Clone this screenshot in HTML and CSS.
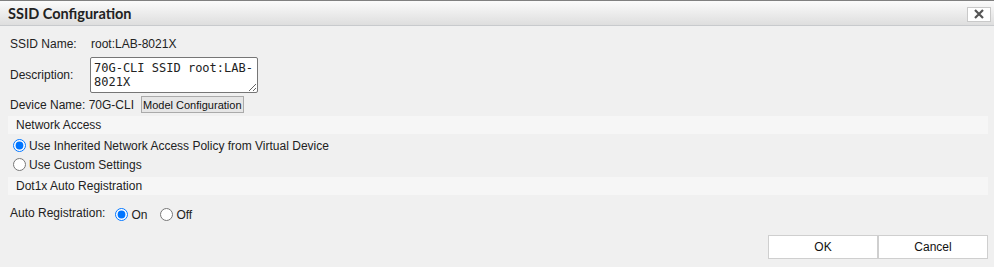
FILE: index.html
```html
<!DOCTYPE html>
<html>
<head>
<meta charset="utf-8">
<link rel="stylesheet" href="styles.css">
</head>
<body>
<div class="dialog">
  <div class="titlebar">
    <h1 class="title">SSID Configuration</h1>
    <button class="close" type="button" aria-label="Close">
      <svg width="12" height="10" viewBox="0 0 12 10"><path d="M2 1 L10 9 M10 1 L2 9" stroke="#555" stroke-width="2.2" fill="none"/></svg>
    </button>
  </div>
  <div class="content">
    <div class="row r-name">
      <span class="label">SSID Name:</span>
      <span class="value">root:LAB-8021X</span>
    </div>
    <div class="row r-desc">
      <span class="label">Description:</span>
      <textarea class="desc">70G-CLI SSID root:LAB-8021X</textarea>
    </div>
    <div class="row r-dev">
      <span class="plain">Device Name: 70G-CLI</span>
      <button class="model" type="button">Model Configuration</button>
    </div>
    <div class="band">Network Access</div>
    <label class="radio-row"><input type="radio" name="na" checked>Use Inherited Network Access Policy from Virtual Device</label>
    <label class="radio-row"><input type="radio" name="na">Use Custom Settings</label>
    <div class="band band2">Dot1x Auto Registration</div>
    <div class="row r-auto">
      <span class="plain">Auto Registration:</span>
      <label class="opt opt-on"><input type="radio" name="ar" checked>On</label>
      <label class="opt"><input type="radio" name="ar">Off</label>
    </div>
    <div class="footer">
      <button class="btn" type="button">OK</button>
      <button class="btn" type="button">Cancel</button>
    </div>
  </div>
</div>
</body>
</html>
```
FILE: styles.css
```css
html, body {
  margin: 0;
  padding: 0;
  background: #f0f0f0;
}
body {
  width: 994px;
  height: 267px;
  overflow: hidden;
  font-family: "Liberation Sans", Arial, sans-serif;
  font-size: 12px;
  color: #222;
}
.dialog {
  display: flex;
  flex-direction: column;
}
.titlebar {
  height: 24px;
  border-top: 1px solid #808080;
  border-bottom: 1px solid #c8cacd;
  background: linear-gradient(#fbfbfb, #dedede);
  display: flex;
  align-items: center;
  justify-content: space-between;
  padding: 0 3px 0 8px;
}
.title {
  margin: 0;
  font-family: Lato, "Open Sans", sans-serif;
  font-weight: 700;
  font-size: 14.5px;
  color: #222;
}
.close {
  width: 24px;
  height: 15px;
  margin-top: 2px;
  padding: 0;
  background: #fff;
  border: 1px solid #c9c9c9;
  display: flex;
  align-items: center;
  justify-content: center;
}
.content {
  padding: 8px 6px 0 8px;
  display: flex;
  flex-direction: column;
}
.row {
  display: flex;
  align-items: center;
}
.r-name {
  height: 20px;
}
.label {
  width: 80px;
  padding-left: 2px;
}
.value {
  padding-left: 1px;
}
.r-desc {
  margin-top: 3px;
  height: 36px;
}
.desc {
  box-sizing: border-box;
  width: 168px;
  height: 36px;
  margin: 0;
  padding: 3px 3px 1px;
  border: 1px solid #767676;
  border-radius: 2px;
  background: #fff;
  font-family: "DejaVu Sans Mono", "Liberation Mono", monospace;
  font-size: 12px;
  line-height: 14px;
  color: #222;
  resize: both;
  overflow: hidden;
}
.r-dev {
  margin-top: 2px;
  height: 19px;
}
.plain {
  padding-left: 2px;
}
.model {
  margin-left: 7px;
  height: 17px;
  padding: 0 1px;
  border: 1px solid #aaa;
  background: #e6e6e6;
  font-family: "Liberation Sans", Arial, sans-serif;
  font-size: 11px;
  color: #111;
}
.band {
  margin-top: 2px;
  height: 18px;
  line-height: 18px;
  background: #f6f6f6;
  padding-left: 8px;
}
.band2 {
  margin-top: 3px;
}
.radio-row {
  height: 19px;
  display: flex;
  align-items: center;
}
.radio-row:first-of-type {
  margin-top: 2px;
}
.radio-row input,
.opt input {
  margin: 0 3px 0 5px;
  width: 13px;
  height: 13px;
  accent-color: #0075ff;
}
.r-auto {
  margin-top: 8px;
  height: 20px;
}
.opt {
  display: flex;
  align-items: center;
  padding-top: 3px;
}
.opt-on {
  margin-left: 5px;
  margin-right: 8px;
}
.footer {
  margin-top: 12px;
  display: flex;
  justify-content: flex-end;
}
.btn {
  box-sizing: border-box;
  width: 110px;
  height: 24px;
  margin: 0;
  background: #fff;
  border: 1px solid #cfcfcf;
  font-family: "Liberation Sans", Arial, sans-serif;
  font-size: 12px;
  color: #111;
}
```
